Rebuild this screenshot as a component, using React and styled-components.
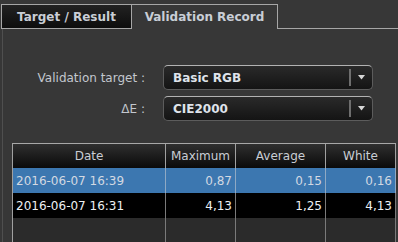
import React from 'react';
import styled, { createGlobalStyle } from 'styled-components';

const Global = createGlobalStyle`
  html, body { margin: 0; padding: 0; background: #373737; }
  body { font-family: "DejaVu Sans", Verdana, sans-serif; font-size: 12px; overflow: hidden; }
`;

const Screen = styled.div`
  width: 398px;
  height: 242px;
  padding-top: 4px;
  box-sizing: border-box;
  display: flex;
  flex-direction: column;
  overflow: hidden;
`;

const TabBar = styled.div`
  display: flex;
  height: 25px;
  padding-left: 1px;
  flex: none;
`;

const Tab = styled.div`
  box-sizing: border-box;
  width: ${p => p.$w}px;
  height: 25px;
  display: flex;
  align-items: center;
  justify-content: center;
  font-weight: bold;
  color: #c9ced6;
  border-top: 1px solid #a6a6a6;
  border-right: 1px solid #a6a6a6;
  ${p => p.$active
    ? `background: transparent;`
    : `background: linear-gradient(#222222, #0d0d0d);
       border-left: 1px solid #a6a6a6;
       border-bottom: 1px solid #a6a6a6;`}
`;

const TabFill = styled.div`
  flex: 1;
  border-bottom: 1px solid #a6a6a6;
`;

const Panel = styled.div`
  flex: 1;
  min-height: 0;
  margin-left: 2px;
  border-left: 1px solid #4f4f4f;
  display: flex;
  flex-direction: column;
`;

const Form = styled.div`
  display: grid;
  grid-template-columns: 142px 210px;
  grid-auto-rows: 25px;
  column-gap: 18px;
  row-gap: 6px;
  margin-top: 36px;
`;

const Label = styled.div`
  display: flex;
  align-items: center;
  justify-content: flex-end;
  color: #c3c7ce;
  white-space: nowrap;
`;

const Combo = styled.div`
  box-sizing: border-box;
  height: 25px;
  display: flex;
  align-items: center;
  border: 1px solid #5c5c5c;
  border-top-color: #b2b2b2;
  border-radius: 5px;
  background: linear-gradient(#2a2a2a, #141414);
  padding-left: 9px;
  font-weight: bold;
  color: #dfe3ea;
`;

const ComboValue = styled.div`
  flex: 1;
`;

const ComboSep = styled.div`
  width: 2px;
  height: 17px;
  background: #6e6e6e;
`;

const ComboArrow = styled.div`
  width: 21px;
  display: flex;
  align-items: center;
  justify-content: center;
`;

const Table = styled.div`
  flex: 1;
  min-height: 0;
  margin: 22px 0 0 9px;
  width: 384px;
  box-sizing: border-box;
  border-left: 1px solid #a0a0a0;
  border-top: 1px solid #a8a8a8;
  display: grid;
  grid-template-columns: 153px 70px 90px 70px;
  grid-template-rows: 24px 25px 25px 1fr;
  background: #2b2b2b;
`;

const HeadCell = styled.div`
  box-sizing: border-box;
  border-right: 1px solid #a0a0a0;
  background: linear-gradient(#2f2f2f, #0a0a0a);
  color: #c9cdd4;
  display: flex;
  align-items: center;
  justify-content: center;
`;

const Cell = styled.div`
  box-sizing: border-box;
  border-right: 1px solid ${p => (p.$sel ? '#8fa9c4' : '#7a7a7a')};
  background: ${p => (p.$sel ? '#3c77b0' : p.$empty ? '#2b2b2b' : '#000000')};
  color: ${p => (p.$sel ? '#d3d9e2' : '#eef0f3')};
  display: flex;
  align-items: center;
  justify-content: ${p => (p.$num ? 'flex-end' : 'flex-start')};
  padding: ${p => (p.$num ? '0 3px 0 0' : '0 0 0 3px')};
  white-space: nowrap;
`;

const Arrow = () => (
  <svg width="7" height="5" viewBox="0 0 7 5">
    <polygon points="0,0 7,0 3.5,4.5" fill="#d6d6d6" />
  </svg>
);

const columns = ['Date', 'Maximum', 'Average', 'White'];
const rows = [
  { date: '2016-06-07 16:39', max: '0,87', avg: '0,15', white: '0,16', sel: true },
  { date: '2016-06-07 16:31', max: '4,13', avg: '1,25', white: '4,13', sel: false },
];

export default function App() {
  return (
    <>
      <Global />
      <Screen>
        <TabBar>
          <Tab $w={131}>Target / Result</Tab>
          <Tab $w={146} $active>Validation Record</Tab>
          <TabFill />
        </TabBar>
        <Panel>
          <Form>
            <Label>Validation target :</Label>
            <Combo>
              <ComboValue>Basic RGB</ComboValue>
              <ComboSep />
              <ComboArrow><Arrow /></ComboArrow>
            </Combo>
            <Label>ΔE :</Label>
            <Combo>
              <ComboValue>CIE2000</ComboValue>
              <ComboSep />
              <ComboArrow><Arrow /></ComboArrow>
            </Combo>
          </Form>
          <Table>
            {columns.map(c => <HeadCell key={c}>{c}</HeadCell>)}
            {rows.map(r => (
              <React.Fragment key={r.date}>
                <Cell $sel={r.sel}>{r.date}</Cell>
                <Cell $sel={r.sel} $num>{r.max}</Cell>
                <Cell $sel={r.sel} $num>{r.avg}</Cell>
                <Cell $sel={r.sel} $num>{r.white}</Cell>
              </React.Fragment>
            ))}
            {columns.map(c => <Cell key={'e' + c} $empty />)}
          </Table>
        </Panel>
      </Screen>
    </>
  );
}
